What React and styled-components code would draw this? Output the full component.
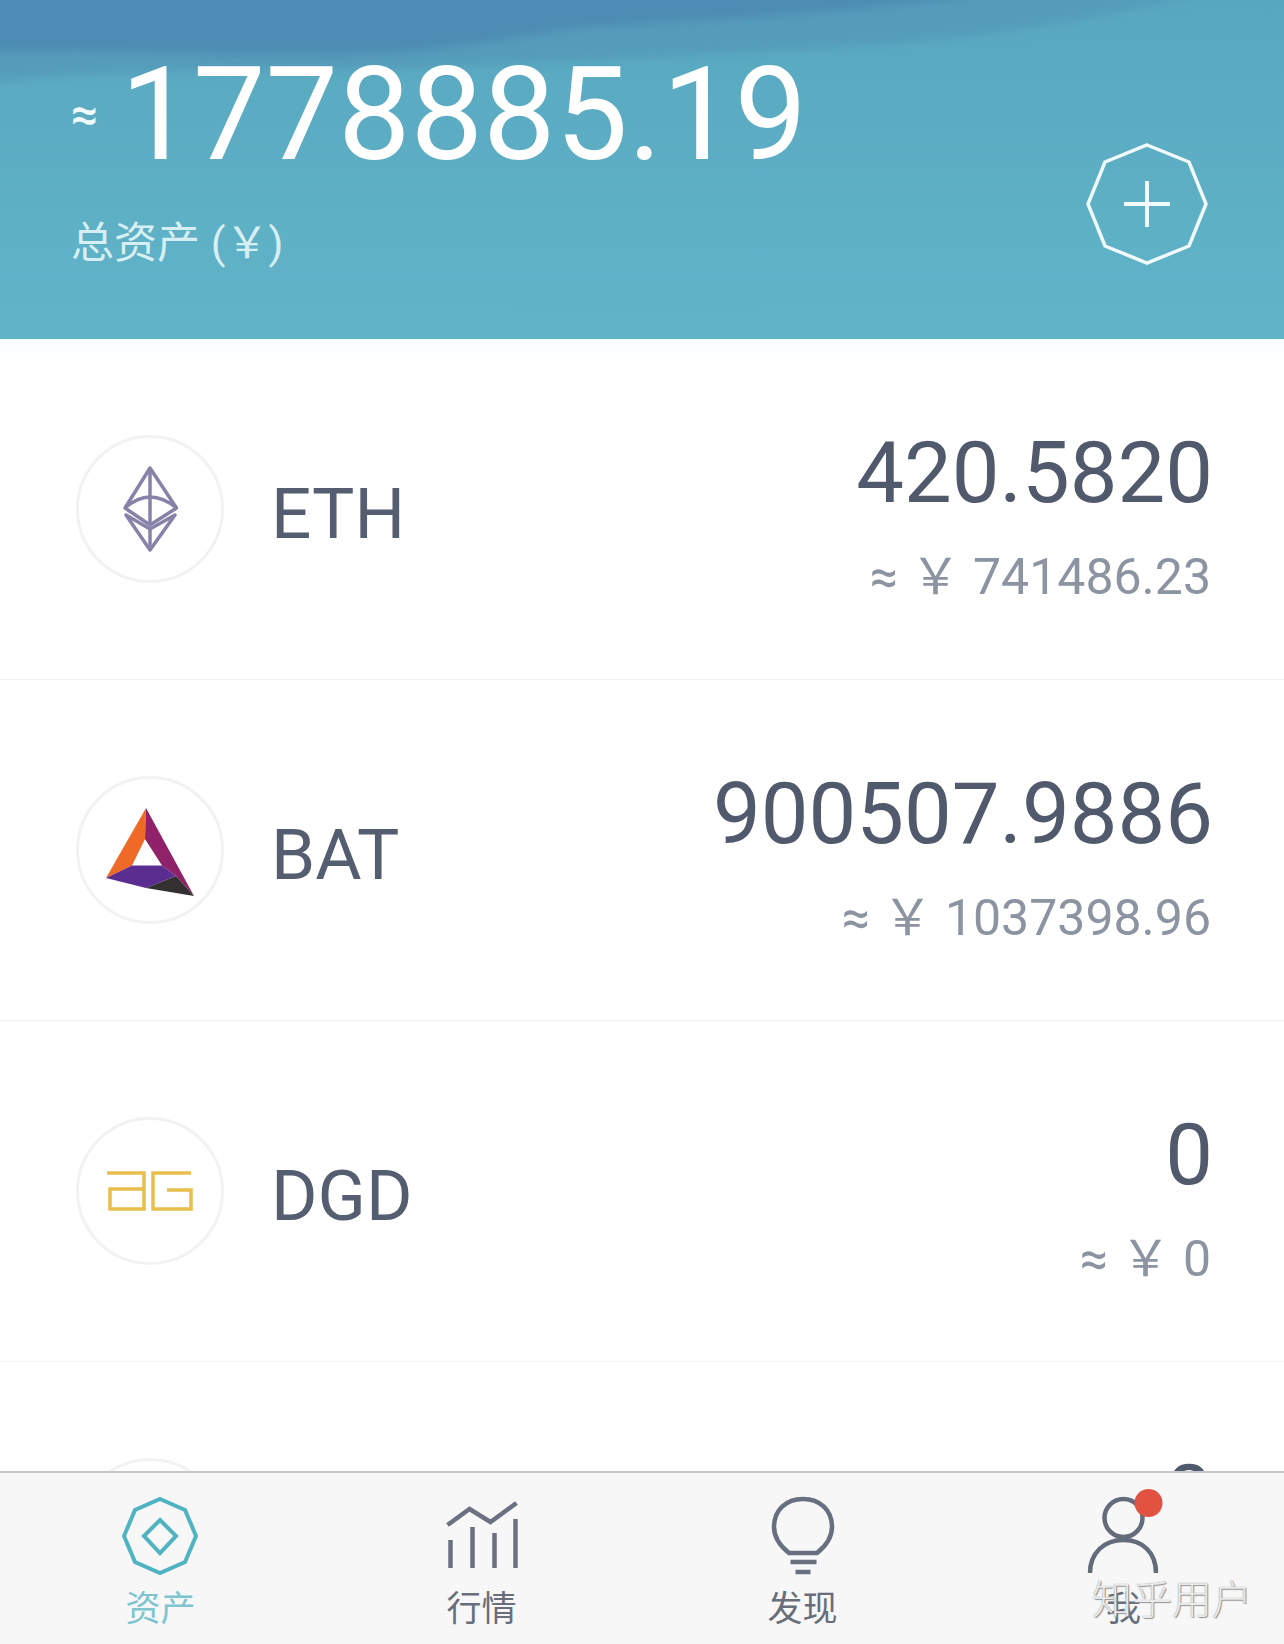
import styled, { createGlobalStyle } from "styled-components";

const GlobalStyle = createGlobalStyle`
  html, body {
    margin: 0;
    padding: 0;
    background: #fff;
  }
  body {
    font-family: Roboto, "Noto Sans CJK SC", sans-serif;
  }
`;

const coins = [
  { name: "ETH", amount: "420.5820", value: "741486.23", Logo: EthLogo },
  { name: "BAT", amount: "900507.9886", value: "1037398.96", Logo: BatLogo },
  { name: "DGD", amount: "0", value: "0", Logo: DgdLogo },
  { name: "", amount: "0", value: "0", Logo: null },
];

export default function App() {
  return (
    <>
      <GlobalStyle />
      <Page>
        <Header>
          <HeaderWave viewBox="0 0 1284 339" preserveAspectRatio="none" aria-hidden="true">
            <defs>
              <filter id="soft" x="-5%" y="-20%" width="110%" height="140%">
                <feGaussianBlur stdDeviation="5" />
              </filter>
            </defs>
            <path
              d="M-20 84 C120 66 300 72 420 68 C560 62 700 56 860 46 C980 38 1080 24 1220 -10 L-20 -10 Z"
              fill="#549cba"
              filter="url(#soft)"
            />
            <path
              d="M-20 52 C120 48 280 60 400 52 C480 46 520 36 580 28 C700 20 860 14 1020 -10 L-20 -10 Z"
              fill="#4e8cb4"
              filter="url(#soft)"
            />
          </HeaderWave>
          <Balance>
            <TotalRow>
              <Approx>≈</Approx>
              <Total>1778885.19</Total>
            </TotalRow>
            <TotalLabel>总资产 (￥)</TotalLabel>
          </Balance>
          <AddButton aria-label="add">
            <svg width="124" height="124" viewBox="0 0 124 124" fill="none" stroke="#f1fafb">
              <polygon points="62,3 104,20 121,62 104,104 62,121 20,104 3,62 20,20" strokeWidth="3.5" />
              <path d="M62 39V85M39 62H85" strokeWidth="4" />
            </svg>
          </AddButton>
        </Header>
        <CoinList>
          {coins.map((coin, i) => (
            <CoinRow key={i}>
              <CoinBadge>{coin.Logo && <coin.Logo />}</CoinBadge>
              <CoinName>{coin.name}</CoinName>
              <CoinValues>
                <Amount>{coin.amount}</Amount>
                <Worth>≈ ￥ {coin.value}</Worth>
              </CoinValues>
            </CoinRow>
          ))}
        </CoinList>
        <TabBar>
          <Tab $active>
            <TabIcon>
              <svg width="84" height="84" viewBox="0 0 84 84" fill="none" stroke="#4fb3c1" strokeWidth="4">
                <polygon points="41,4 66,15 77,41 66,67 41,78 16,67 5,41 16,15" />
                <polygon points="41,25 57,41 41,58 25,41" />
              </svg>
            </TabIcon>
            资产
          </Tab>
          <Tab>
            <TabIcon>
              <svg width="84" height="84" viewBox="0 0 84 84" fill="none" stroke="#6b7180" strokeWidth="4.5">
                <path d="M7.5 30L29.5 14L50.5 27L76.5 8" />
                <path d="M10.5 45V73M32.5 32V73M54.5 38V73M75.5 24V73" />
              </svg>
            </TabIcon>
            行情
          </Tab>
          <Tab>
            <TabIcon>
              <svg width="84" height="84" viewBox="0 0 84 84" fill="none" stroke="#687080" strokeWidth="4.5">
                <path d="M28 58C18 50 13 42 13 32C13 15 25 4 42 4C59 4 71 15 71 32C71 42 66 50 56 58Z" />
                <path d="M29.5 67H55.5M34.5 77H49.5" />
              </svg>
            </TabIcon>
            发现
          </Tab>
          <Tab>
            <TabIcon>
              <UserIcon width="84" height="84" viewBox="0 0 84 84" fill="none" stroke="#646b7a" strokeWidth="4.5">
                <circle cx="41.5" cy="23" r="19" />
                <path d="M8 78C8 58 22 45 41.5 45C61 45 74 58 74 78" />
                <circle cx="66.5" cy="8" r="14" fill="#e25241" stroke="none" />
              </UserIcon>
            </TabIcon>
            我
          </Tab>
          <Watermark>知乎用户</Watermark>
        </TabBar>
      </Page>
    </>
  );
}

function EthLogo() {
  return (
    <svg width="60" height="86" viewBox="0 0 60 86" fill="none" stroke="#8783a8" strokeWidth="3.5" strokeLinejoin="round">
      <path d="M30 2L56.5 42L30 59L5 42Z" />
      <path d="M5 42C14 34 22 31 30 31C38 31 47 34 56.5 42" />
      <path d="M30 2V59" />
      <path d="M6 49L30 84L55 49L30 63Z" />
      <path d="M30 63V84" />
    </svg>
  );
}

function BatLogo() {
  return (
    <svg width="88" height="92" viewBox="0 -4 88 92" aria-hidden="true">
      <polygon points="40,0 0,70 26,57.5 39,31" fill="#ee6a26" />
      <polygon points="40,0 39,31 56,57.5 70,68 88,88" fill="#8f2268" />
      <polygon points="0,70 26,57.5 56,57.5 70,68 40,80" fill="#5c2d91" />
      <polygon points="40,80 70,68 88,88" fill="#33312f" />
    </svg>
  );
}

function DgdLogo() {
  return (
    <svg width="86" height="42" viewBox="0 0 86 42" fill="none" stroke="#e8bf4c" strokeWidth="3.5">
      <path d="M0 3H37V39H3V19H37" />
      <path d="M84 3H46V39H84V20H60" />
    </svg>
  );
}

const Page = styled.div`
  width: 1284px;
  height: 1644px;
  display: flex;
  flex-direction: column;
  overflow: hidden;
  background: #fff;
`;

const Header = styled.header`
  position: relative;
  flex: 0 0 339px;
  display: flex;
  justify-content: space-between;
  padding: 0 75px 0 71px;
  box-sizing: border-box;
  background: linear-gradient(180deg, #58a7c0 0%, #5cadc3 40%, #60b4c8 100%);
  color: #fff;
`;

const HeaderWave = styled.svg`
  position: absolute;
  inset: 0;
  width: 100%;
  height: 100%;
`;

const Balance = styled.div`
  position: relative;
  padding-top: 41px;
`;

const TotalRow = styled.div`
  display: flex;
  align-items: center;
  gap: 22px;
`;

const Approx = styled.span`
  font-size: 48px;
  line-height: 1;
  font-weight: 500;
  color: #f0f9fb;
`;

const Total = styled.span`
  font-size: 129px;
  line-height: 148px;
  font-weight: 400;
`;

const TotalLabel = styled.div`
  margin-top: 26px;
  font-size: 43px;
  line-height: 56px;
  font-weight: 400;
  color: #d7eef3;
`;

const AddButton = styled.div`
  position: relative;
  align-self: flex-start;
  margin-top: 142px;
`;

const CoinList = styled.main`
  flex: 1;
  overflow: hidden;
  background: linear-gradient(180deg, #fafdfe 0, #fff 24px);
`;

const CoinRow = styled.section`
  height: 341px;
  box-sizing: border-box;
  display: flex;
  align-items: center;
  padding: 0 71px 0 76px;
  border-bottom: 1px solid #f1f2f3;
`;

const CoinBadge = styled.div`
  width: 148px;
  height: 148px;
  box-sizing: border-box;
  border: 3px solid #f2f2f3;
  border-radius: 50%;
  display: flex;
  align-items: center;
  justify-content: center;
`;

const CoinName = styled.div`
  margin-left: 47px;
  font-size: 71px;
  line-height: 80px;
  color: #555e70;
  padding-top: 10px;
`;

const CoinValues = styled.div`
  margin-left: auto;
  text-align: right;
  padding-top: 12px;
`;

const Amount = styled.div`
  font-size: 85px;
  line-height: 100px;
  color: #505a6c;
`;

const Worth = styled.div`
  margin: 24px 2px 0 0;
  font-size: 50px;
  line-height: 60px;
  color: #8c93a1;
`;

const TabBar = styled.nav`
  position: relative;
  flex: 0 0 173px;
  box-sizing: border-box;
  display: grid;
  grid-template-columns: repeat(4, 1fr);
  background: #f7f7f8;
  border-top: 2px solid #c6c7c9;
`;

const Tab = styled.div`
  display: flex;
  flex-direction: column;
  align-items: center;
  padding-top: 22px;
  font-size: 35px;
  line-height: 44px;
  color: ${(p) => (p.$active ? "#7fc5d0" : "#686e7a")};
`;

const TabIcon = styled.div`
  height: 84px;
  margin-bottom: 9px;
`;

const UserIcon = styled.svg`
  overflow: visible;
`;

const Watermark = styled.div`
  position: absolute;
  left: 1092px;
  top: 104px;
  font-size: 40px;
  line-height: 48px;
  font-weight: 300;
  color: rgba(255, 255, 255, 0.85);
  text-shadow: 0 0 1px #777, 1px 1px 1px #999;
`;
